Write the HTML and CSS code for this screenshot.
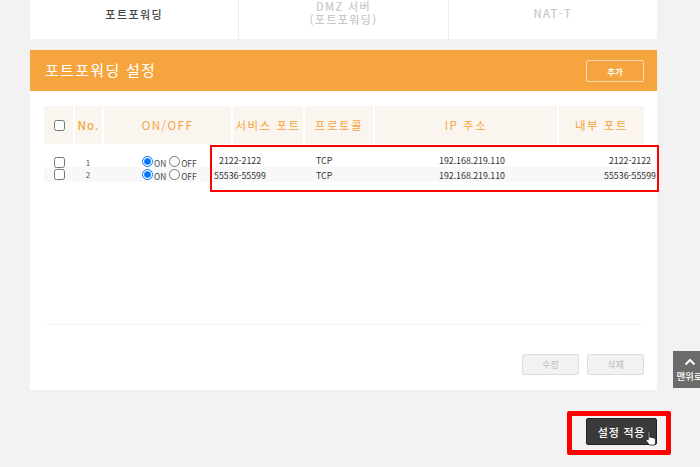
FILE: index.html
```html
<!DOCTYPE html>
<html lang="ko">
<head>
<meta charset="utf-8">
<title>포트포워딩 설정</title>
<link rel="stylesheet" href="styles.css">
</head>
<body>
<main class="page">
  <nav class="tabs">
    <div class="tab active">포트포워딩</div>
    <div class="tab">DMZ 서버<br>(포트포워딩)</div>
    <div class="tab">NAT-T</div>
  </nav>
  <section class="card">
    <header class="card-head">
      <h2>포트포워딩 설정</h2>
      <button class="add" type="button">추가</button>
    </header>
    <div class="card-body">
      <div class="grid thead">
        <div class="th"><input type="checkbox"></div>
        <div class="th no">No.</div>
        <div class="th">ON/OFF</div>
        <div class="th">서비스 포트</div>
        <div class="th">프로토콜</div>
        <div class="th">IP 주소</div>
        <div class="th">내부 포트</div>
      </div>
      <div class="rows">
        <div class="grid row">
          <div class="td"><input type="checkbox"></div>
          <div class="td num">1</div>
          <div class="td onoff"><input type="radio" name="r1" checked><span>ON</span><input type="radio" name="r1"><span>OFF</span></div>
          <div class="td svc">2122-2122</div>
          <div class="td proto">TCP</div>
          <div class="td ip">192.168.219.110</div>
          <div class="td inner">2122-2122</div>
        </div>
        <div class="grid row alt">
          <div class="td"><input type="checkbox"></div>
          <div class="td num">2</div>
          <div class="td onoff"><input type="radio" name="r2" checked><span>ON</span><input type="radio" name="r2"><span>OFF</span></div>
          <div class="td svc">55536-55599</div>
          <div class="td proto">TCP</div>
          <div class="td ip">192.168.219.110</div>
          <div class="td inner">55536-55599</div>
        </div>
      </div>
      <div class="spacer"></div>
      <div class="actions">
        <button class="ghost" type="button">수정</button>
        <button class="ghost" type="button">삭제</button>
      </div>
    </div>
  </section>
  <div class="apply-row">
    <button class="apply" type="button">설정 적용</button>
  </div>
</main>
<div class="mark mark-table"></div>
<div class="mark mark-apply"></div>
<svg class="cursor" viewBox="0 0 13 17" width="12" height="16" aria-hidden="true">
  <path d="M3.500 1.200c.8-.5 1.600 0 1.600.9v4.600l.9-.2c.5-.1.900.1 1.100.4.500-.3 1.200-.1 1.500.4.500-.3 1.200-.1 1.500.4.500-.1 1.200.3 1.200 1v3.200c0 1.500-.5 2.400-1 3.200H4.800c-.6-1.200-1.600-2.300-3-3.900-.7-.8-.7-1.600-.2-2 .5-.4 1.200-.3 1.900.3V2.100z" fill="#fff" stroke="#222" stroke-width=".9" stroke-linejoin="round"/>
</svg>
<a class="top" href="#"><svg viewBox="0 0 12 8" width="12" height="8" aria-hidden="true"><path d="M1.500 6.500 6 2l4.500 4.500" fill="none" stroke="#fff" stroke-width="2"/></svg><span>맨위로</span></a>
</body>
</html>
```
FILE: styles.css
```css
* { box-sizing: border-box; }
html, body { margin: 0; height: 467px; overflow: hidden; }
body {
  background: #f2f2f2;
  font-family: "Noto Sans CJK KR", "Noto Sans", sans-serif;
  position: relative;
}
.page { width: 627px; margin-left: 30px; }
button { font-family: inherit; padding: 0; cursor: pointer; }

.tabs { display: flex; height: 39px; background: #fff; }
.tab {
  flex: 1;
  display: flex;
  align-items: center;
  justify-content: center;
  text-align: center;
  font-size: 11px;
  line-height: 13px;
  font-weight: 500;
  letter-spacing: 1.400px;
  color: #cacaca;
  border-left: 1px solid #f6ebe2;
  padding-bottom: 13px;
}
.tab:first-child { border-left: 0; }
.tab.active { color: #444; padding-bottom: 11px; }

.card { margin-top: 11px; height: 340px; background: #fff; display: flex; flex-direction: column; }
.card-head {
  height: 41px;
  background: #f6a53e;
  display: flex;
  align-items: center;
  justify-content: space-between;
  padding: 0 13px 0 15px;
}
.card-head h2 { margin: 0 0 2px; font-size: 15px; font-weight: 400; letter-spacing: 1.300px; color: #fff; }
.add {
  width: 58px;
  height: 22px;
  border: 1px solid #fbdcae;
  border-radius: 2px;
  background: transparent;
  color: #fff;
  font-size: 8.500px;
  font-weight: 700;
}

.card-body { flex: 1; display: flex; flex-direction: column; padding: 15px 0 15px 14px; }
.grid { display: grid; grid-template-columns: 29px 27px 127px 70px 68px 182px 85px; column-gap: 2px; width: 600px; }
.thead { height: 38px; }
.th {
  background: #fbf5f0;
  color: #f6a53e;
  font-size: 11.500px;
  font-weight: 400;
  letter-spacing: 1.500px;
  display: flex;
  align-items: center;
  justify-content: center;
  white-space: nowrap;
}
.th.no { font-weight: 500; letter-spacing: 1px; }
.th input { margin: 0 0 0 1px; width: 11px; height: 11px; }

.rows { margin-top: 8px; width: 612px; }
.row { height: 15px; width: 612px; }
.row.alt { background: #f8f8f8; }
.row.alt .td { padding-top: 1px; }
.td {
  font-size: 8.800px;
  color: #333;
  display: flex;
  align-items: center;
  justify-content: center;
  white-space: nowrap;
}
.td input[type=checkbox] { margin: 3px 0 0 1px; width: 11px; height: 11px; }
.row.alt .td input[type=checkbox] { margin-top: -1px; }
.num { font-size: 8px; color: #555; padding-top: 3px; margin-left: -1px; }
.row.alt .td.num { padding-top: 0; }
.onoff { justify-content: flex-start; padding-left: 38px; font-size: 8.300px; color: #444; }
.onoff input { margin: 2px 1px 0 0; width: 11px; height: 11px; }
.row.alt .onoff input { margin-top: -1px; }
.onoff span { margin: 5px 3px 0 0; }
.row.alt .onoff span { margin-top: 2px; }
.svc { justify-content: flex-start; margin-left: -19px; }
.row:not(.alt) .svc { padding-left: 5px; }
.proto { justify-content: flex-start; padding-left: 11px; }
.ip { padding-left: 12px; }
.inner { justify-content: flex-end; margin-right: -7px; }
.row.alt .inner { margin-right: -12px; }

.spacer { flex: 1; border-bottom: 1px solid #f4f4f4; margin-bottom: 29px; width: 600px; }
.actions { display: flex; justify-content: flex-end; gap: 8px; width: 600px; }
.ghost {
  width: 57px;
  height: 21px;
  background: #f2f2f2;
  border: 1px solid #ddd;
  border-radius: 2px;
  color: #bbb;
  font-size: 9px;
  font-weight: 400;
}

.apply-row { display: flex; justify-content: flex-end; padding: 28px 0 0; }
.apply {
  width: 71px;
  height: 27px;
  background: #3a3a3a;
  border: 1px solid #222;
  border-radius: 2px;
  color: #fff;
  font-size: 11px;
  font-weight: 500;
  letter-spacing: .8px;
}

.mark { position: absolute; border: 2px solid #f00; }
.mark-table { left: 210px; top: 145px; width: 449px; height: 47px; }
.mark-apply { left: 567px; top: 411px; width: 104px; height: 44px; border-width: 5px; border-radius: 2px; }
.cursor { position: absolute; left: 645px; top: 431px; }

.top {
  position: absolute;
  left: 673px;
  top: 351px;
  width: 33px;
  height: 37px;
  background: #6b6b6b;
  color: #fff;
  font-size: 9.500px;
  font-weight: 500;
  line-height: 12px;
  text-decoration: none;
  display: flex;
  flex-direction: column;
  align-items: center;
  padding-top: 7px;
  gap: 4px;
  white-space: nowrap;
}
```
